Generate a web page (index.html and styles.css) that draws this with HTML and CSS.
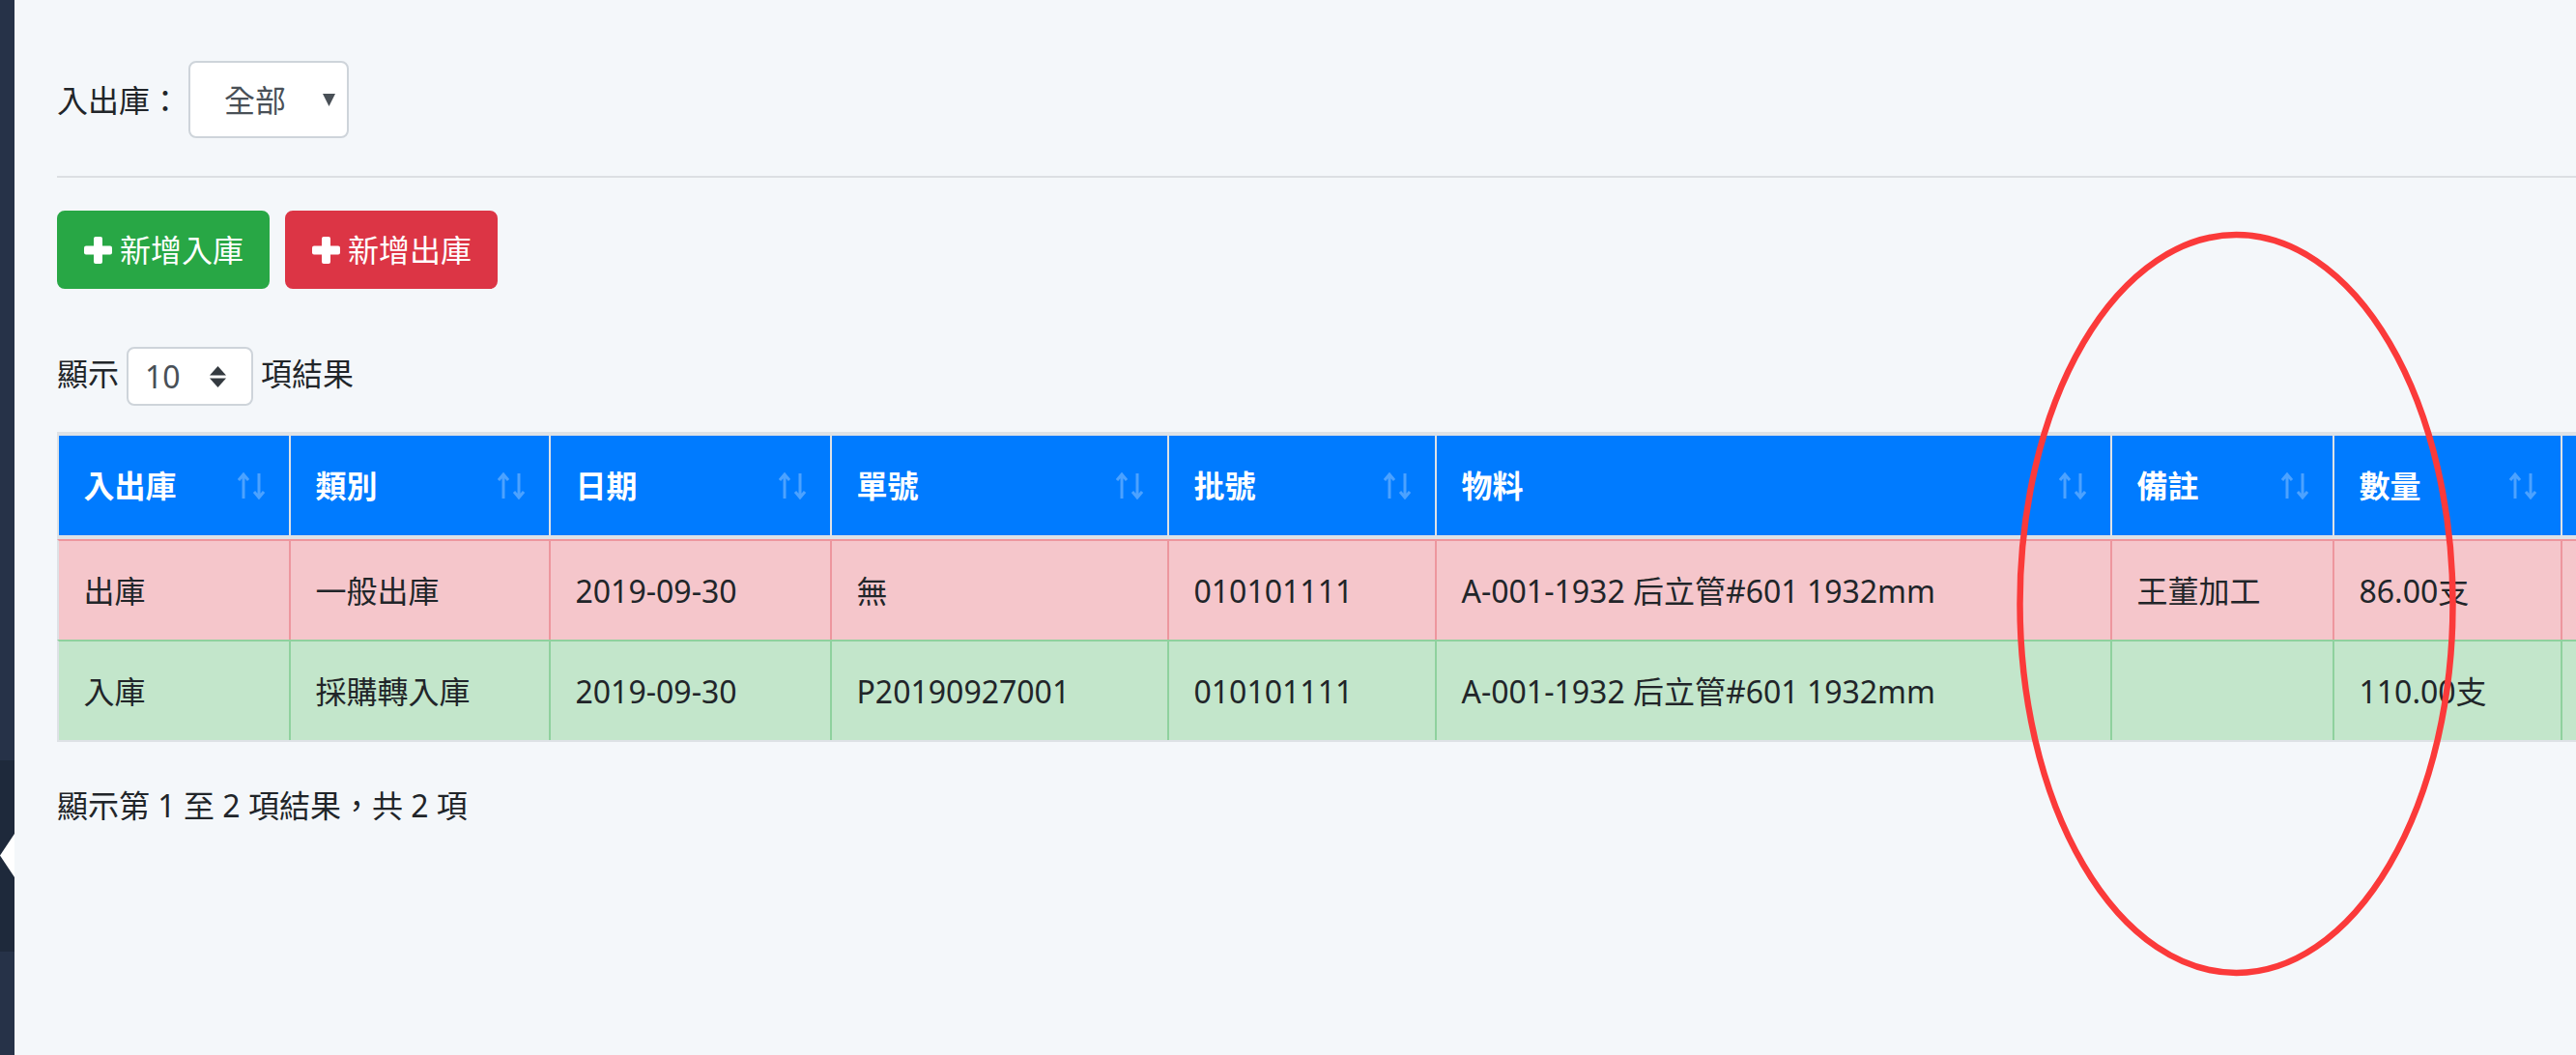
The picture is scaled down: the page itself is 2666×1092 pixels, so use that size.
FILE: index.html
```html
<!DOCTYPE html>
<html lang="zh-TW">
<head>
<meta charset="utf-8">
<title>入出庫</title>
<link rel="stylesheet" href="styles.css">
</head>
<body>
<div class="app">
  <aside class="sidebar">
    <div class="sb-top"></div>
    <div class="sb-dark">
      <svg class="sb-toggle" viewBox="0 0 15 45"><polygon points="15,0 15,45 0,22.5" fill="#ffffff"/></svg>
    </div>
    <div class="sb-bottom"></div>
  </aside>
  <main class="main">
    <div class="filter">
      <span class="filter-label">入出庫：</span>
      <div class="select select-lg">
        <span class="select-text">全部</span>
        <svg class="caret" viewBox="0 0 13 13"><polygon points="0,0 13,0 6.5,13" fill="#495057"/></svg>
      </div>
    </div>
    <hr class="divider">
    <div class="actions">
      <button class="btn btn-success"><svg class="plus" viewBox="0 0 29 28"><rect x="10" y="0" width="9" height="28" rx="2" fill="#fff"/><rect x="0" y="9.5" width="29" height="9" rx="2" fill="#fff"/></svg><span>新增入庫</span></button>
      <button class="btn btn-danger"><svg class="plus" viewBox="0 0 29 28"><rect x="10" y="0" width="9" height="28" rx="2" fill="#fff"/><rect x="0" y="9.5" width="29" height="9" rx="2" fill="#fff"/></svg><span>新增出庫</span></button>
    </div>
    <div class="length">
      <span class="length-label">顯示</span>
      <div class="select select-sm">
        <span class="select-text">10</span>
        <svg class="updown" viewBox="0 0 17 22"><polygon points="8.5,0 17,9.5 0,9.5" fill="#343a40"/><polygon points="0,12.5 17,12.5 8.5,22" fill="#343a40"/></svg>
      </div>
      <span class="length-label">項結果</span>
    </div>
    <table class="grid">
      <thead>
        <tr>
          <th class="c1">入出庫<svg class="sort" viewBox="0 0 28 28"><path d="M6 27V2M1 8L6 2L11 8M22 1V26M17 20L22 26L27 20"/></svg></th>
          <th class="c2">類別<svg class="sort" viewBox="0 0 28 28"><path d="M6 27V2M1 8L6 2L11 8M22 1V26M17 20L22 26L27 20"/></svg></th>
          <th class="c3">日期<svg class="sort" viewBox="0 0 28 28"><path d="M6 27V2M1 8L6 2L11 8M22 1V26M17 20L22 26L27 20"/></svg></th>
          <th class="c4">單號<svg class="sort" viewBox="0 0 28 28"><path d="M6 27V2M1 8L6 2L11 8M22 1V26M17 20L22 26L27 20"/></svg></th>
          <th class="c5">批號<svg class="sort" viewBox="0 0 28 28"><path d="M6 27V2M1 8L6 2L11 8M22 1V26M17 20L22 26L27 20"/></svg></th>
          <th class="c6">物料<svg class="sort" viewBox="0 0 28 28"><path d="M6 27V2M1 8L6 2L11 8M22 1V26M17 20L22 26L27 20"/></svg></th>
          <th class="c7">備註<svg class="sort" viewBox="0 0 28 28"><path d="M6 27V2M1 8L6 2L11 8M22 1V26M17 20L22 26L27 20"/></svg></th>
          <th class="c8">數量<svg class="sort" viewBox="0 0 28 28"><path d="M6 27V2M1 8L6 2L11 8M22 1V26M17 20L22 26L27 20"/></svg></th>
          <th class="c9"></th>
        </tr>
      </thead>
      <tbody>
        <tr class="row-danger">
          <td>出庫</td>
          <td>一般出庫</td>
          <td>2019-09-30</td>
          <td>無</td>
          <td>010101111</td>
          <td>A-001-1932 后立管#601 1932mm</td>
          <td>王董加工</td>
          <td>86.00支</td>
          <td></td>
        </tr>
        <tr class="row-success">
          <td>入庫</td>
          <td>採購轉入庫</td>
          <td>2019-09-30</td>
          <td>P20190927001</td>
          <td>010101111</td>
          <td>A-001-1932 后立管#601 1932mm</td>
          <td></td>
          <td>110.00支</td>
          <td></td>
        </tr>
      </tbody>
    </table>
    <div class="info">顯示第 1 至 2 項結果，共 2 項</div>
  </main>
</div>
<svg class="annotation" viewBox="0 0 2666 1092"><ellipse cx="2314.5" cy="625" rx="224" ry="382"/></svg>
</body>
</html>
```

FILE: styles.css
```css
* { box-sizing: border-box; }

html, body {
  margin: 0;
  height: 100%;
}

body {
  font-family: "Noto Sans", "Noto Sans CJK TC", sans-serif;
  font-size: 32px;
  color: #212529;
  background: #f4f7fa;
  overflow: hidden;
  position: relative;
}

.app {
  display: flex;
  height: 100vh;
}

.sidebar {
  flex: 0 0 15px;
  width: 15px;
  background: #263248;
  display: flex;
  flex-direction: column;
}

.sb-top { flex: 0 0 787px; }

.sb-dark {
  flex: 0 0 198px;
  background: #1e293b;
  padding-top: 76px;
}

.sb-toggle {
  display: block;
  width: 15px;
  height: 45px;
}

.sb-bottom { flex: 1; }

.main {
  flex: 1;
  min-width: 0;
  overflow: hidden;
  padding: 63px 0 0 44px;
}

.filter {
  display: flex;
  align-items: center;
  gap: 8px;
  height: 80px;
}

.filter-label,
.length-label {
  line-height: 51px;
  white-space: nowrap;
}

.select {
  display: flex;
  align-items: center;
  background: #ffffff;
  border: 2px solid #ced4da;
  border-radius: 8px;
  color: #495057;
  line-height: 51px;
}

.select-lg {
  width: 166px;
  height: 80px;
  padding-left: 35px;
}

.select-lg .caret {
  width: 13px;
  height: 13px;
  margin-left: auto;
  margin-right: 12px;
}

.divider {
  border: 0;
  border-top: 2px solid #dcdfe3;
  margin: 39px 0 0;
  height: 0;
}

.actions {
  display: flex;
  gap: 16px;
  margin-top: 34px;
}

.btn {
  width: 220px;
  height: 81px;
  display: flex;
  align-items: center;
  gap: 8px;
  padding: 0 0 0 26px;
  border: 2px solid transparent;
  border-radius: 8px;
  color: #ffffff;
  font: inherit;
  line-height: 51px;
}

.btn-success { background: #28a745; border-color: #28a745; }
.btn-danger { background: #dc3545; border-color: #dc3545; }

.plus {
  width: 29px;
  height: 28px;
  flex: none;
}

.length {
  display: flex;
  align-items: center;
  gap: 8px;
  margin-top: 60px;
  height: 61px;
}

.length-label { margin-bottom: 6px; }

.select-sm {
  width: 131px;
  height: 61px;
  padding-left: 17px;
}

.select-sm .updown {
  width: 17px;
  height: 22px;
  margin-left: auto;
  margin-right: 26px;
}

.grid {
  margin-top: 27px;
  border-collapse: separate;
  border-spacing: 0;
  table-layout: fixed;
  width: 2831px;
  border-bottom: 2px solid #dee2e6;
}

.grid th,
.grid td {
  text-align: left;
  vertical-align: middle;
  white-space: nowrap;
  overflow: hidden;
  line-height: 51px;
  border-left: 2px solid #dee2e6;
}

.grid th {
  position: relative;
  background: #007bff;
  color: #ffffff;
  font-weight: 700;
  padding: 26px 25.5px;
  border-top: 4px solid #dee2e6;
  border-bottom: 4px solid #dee2e6;
}

.grid td {
  padding: 25.5px;
  border-top: 2px solid transparent;
}

.c1 { width: 240px; }
.c2 { width: 269px; }
.c3 { width: 291px; }
.c4 { width: 349px; }
.c5 { width: 277px; }
.c6 { width: 699px; }
.c7 { width: 230px; }
.c8 { width: 236px; }
.c9 { width: 240px; }

.sort {
  position: absolute;
  right: 25px;
  top: 38px;
  width: 28px;
  height: 28px;
  fill: none;
  stroke: #4ca2ff;
  stroke-width: 3;
}

.row-danger td {
  background: #f5c6cb;
  border-top-color: #ed969e;
  border-left-color: #ed969e;
}

.row-success td {
  background: #c3e6cb;
  border-top-color: #8fd19e;
  border-left-color: #8fd19e;
}

.grid tr td:first-child {
  border-left-color: #dee2e6;
}

.info {
  margin-top: 40px;
  line-height: 51px;
}

.annotation {
  position: absolute;
  left: 0;
  top: 0;
  width: 2666px;
  height: 1092px;
  pointer-events: none;
}

.annotation ellipse {
  fill: none;
  stroke: #fb3a3a;
  stroke-width: 6.5;
}
```
